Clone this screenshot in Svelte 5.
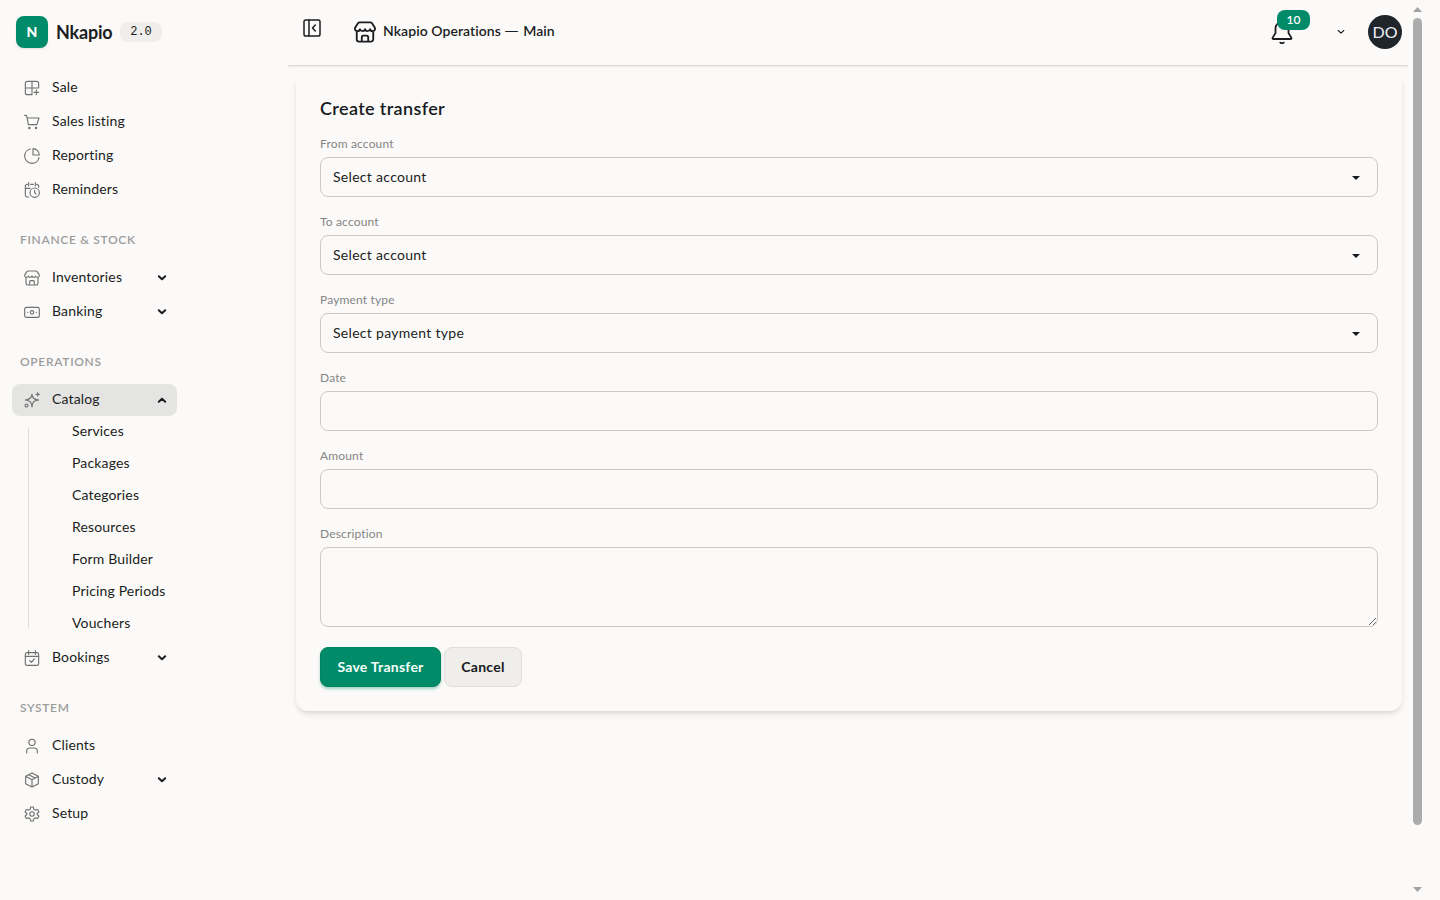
<script lang="ts">
  type Item = { label: string; icon: string; arrow?: 'down' | 'up'; children?: string[] }
  type Section = { title?: string; items: Item[] }

  // icon markup, 24x24 viewBox, stroked with currentColor
  const store =
    '<path d="M3 11.500V20a2.500 2.500 0 0 0 2.500 2.500h13A2.500 2.500 0 0 0 21 20v-8.500M8.500 22.500v-5A1.500 1.500 0 0 1 10 16h4a1.500 1.500 0 0 1 1.500 1.500v5M6.200 1.500h11.600c.8 0 1.400.3 1.900 1L22.600 7c1 2-.3 4-2.300 4-1.500 0-2.600-.7-2.800-2-.5 1.300-1.400 2-2.800 2S12.300 10.200 12 9c-.3 1.200-1.300 2-2.700 2S7 10.300 6.500 9c-.2 1.300-1.300 2-2.800 2-2 0-3.300-2-2.300-4l2.900-4.500c.5-.7 1.100-1 1.900-1z"/>'

  const icons: Record<string, string> = {
    sale: '<path d="M12 2v20M2 12h20M22 12V5a3 3 0 0 0-3-3H5a3 3 0 0 0-3 3v14a3 3 0 0 0 3 3h7M18.500 15v7M15 18.500h7"/>',
    cart: '<path d="M1 2h1.500c1 0 1.500.5 1.700 1.500L6.500 16h12.700L22.500 6H5"/><circle cx="8" cy="21" r="1"/><circle cx="18" cy="21" r="1"/>',
    chart: '<path d="M9.500 1.500C4.500 2.500 1 7 1 12a11 11 0 0 0 11 11c5 0 9.500-3.500 10.500-8.500"/><path d="M13.500 1v9.500h9.500C23 5.500 18.500 1 13.500 1z"/>',
    reminder: '<path d="M7 1v5M17 1v5M2 9.500h7M22 8V6.500a3 3 0 0 0-3-3M7 22.500H5a3 3 0 0 1-3-3v-13a3 3 0 0 1 3-3M10 3.500h4"/><circle cx="16" cy="16" r="7"/><path d="M16 12.500V16l2 2"/>',
    store,
    cash: '<rect x="1" y="5" width="22" height="15" rx="2.500"/><circle cx="12" cy="12.500" r="2.600"/><path d="M5.500 12.500h.1M18.500 12.500h.1"/>',
    sparkles: '<path d="M12 3.500c.5 5.200 2.300 7.500 10 8.500-7.500 1-9.500 3.200-10 10.500-.7-7.300-2.700-9.500-10-10.500C9.300 11 11.500 8.700 12 3.500z"/><path d="M20.500 1v5M18 3.500h5"/><circle cx="3.800" cy="20.200" r="2.200"/>',
    booking: '<rect x="2" y="4" width="20" height="19" rx="2.500"/><path d="M7 1v5.500M17 1v5.500M2 9.500h20M8.500 16l2.500 2.500 4.500-5"/>',
    user: '<circle cx="12" cy="6.500" r="4.700"/><path d="M4 22.500V20a5 5 0 0 1 5-5h6a5 5 0 0 1 5 5v2.500"/>',
    box: '<path d="M12 1.500 21.500 6.500v11L12 22.500l-9.500-5v-11zM2.500 6.500l9.500 5 9.500-5M12 11.500v11M7.200 4l9.500 5"/>',
    gear: '<circle cx="12" cy="12" r="3.300"/><path d="M10 1.500h4l.8 3.500 2 1.200 3.600-1 2 3.500-2.600 2.500v1.600l2.600 2.500-2 3.500-3.600-1-2 1.200-.8 3.500h-4l-.8-3.500-2-1.200-3.600 1-2-3.500 2.600-2.500v-1.600L1.600 8.700l2-3.500 3.600 1 2-1.200z"/>',
  }

  const sections: Section[] = [
    {
      items: [
        { label: 'Sale', icon: 'sale' },
        { label: 'Sales listing', icon: 'cart' },
        { label: 'Reporting', icon: 'chart' },
        { label: 'Reminders', icon: 'reminder' },
      ],
    },
    {
      title: 'Finance & Stock',
      items: [
        { label: 'Inventories', icon: 'store', arrow: 'down' },
        { label: 'Banking', icon: 'cash', arrow: 'down' },
      ],
    },
    {
      title: 'Operations',
      items: [
        {
          label: 'Catalog',
          icon: 'sparkles',
          arrow: 'up',
          children: ['Services', 'Packages', 'Categories', 'Resources', 'Form Builder', 'Pricing Periods', 'Vouchers'],
        },
        { label: 'Bookings', icon: 'booking', arrow: 'down' },
      ],
    },
    {
      title: 'System',
      items: [
        { label: 'Clients', icon: 'user' },
        { label: 'Custody', icon: 'box', arrow: 'down' },
        { label: 'Setup', icon: 'gear' },
      ],
    },
  ]

  const selects = [
    { label: 'From account', value: 'Select account' },
    { label: 'To account', value: 'Select account' },
    { label: 'Payment type', value: 'Select payment type' },
  ]
</script>

<div class="app">
  <aside>
    <div class="brand">
      <span class="logo">N</span>
      <span class="name">Nkapio</span>
      <span class="version">2.0</span>
    </div>
    <nav>
      {#each sections as section}
        {#if section.title}
          <h2>{section.title}</h2>
        {/if}
        <ul>
          {#each section.items as item}
            <li>
              <a class="item" class:open={item.children} href="#top">
                <svg class="icon" viewBox="0 0 24 24">{@html icons[item.icon]}</svg>
                <span>{item.label}</span>
                {#if item.arrow}
                  <svg class="arrow {item.arrow}" viewBox="0 0 10 10"><path d="M1.800 3.300 5 6.300l3.200-3" /></svg>
                {/if}
              </a>
              {#if item.children}
                <ul class="children">
                  {#each item.children as child}
                    <li><a href="#top">{child}</a></li>
                  {/each}
                </ul>
              {/if}
            </li>
          {/each}
        </ul>
      {/each}
    </nav>
  </aside>

  <main>
    <header>
      <svg class="collapse" viewBox="0 0 18 18">
        <rect x="1" y="1" width="16" height="16" rx="1.800" /><path d="M6 1v16M12.300 6 9.500 9l2.800 3" />
      </svg>
      <svg class="shop" viewBox="0 0 24 24">{@html store}</svg>
      <strong>Nkapio Operations <i>—</i> Main</strong>
      <div class="bell">
        <svg viewBox="0 0 22 24">
          <path d="M11 2a6.500 6.500 0 0 0-6.500 6.500V13L1.700 17.600c-.5.900 0 1.400.8 1.400h17c.8 0 1.300-.5.8-1.400L17.500 13V8.500A6.500 6.500 0 0 0 11 2z" />
          <path d="M9.300 22.600c1 .8 2.400.8 3.400 0" />
        </svg>
        <span>10</span>
      </div>
      <svg class="caret" viewBox="0 0 8 8"><path d="M1.200 2.500 4 5.200l2.800-2.700" /></svg>
      <div class="avatar">DO</div>
    </header>

    <form class="card">
      <h1>Create transfer</h1>
      {#each selects as field}
        <div class="field">
          <span class="label">{field.label}</span>
          <div class="control select">
            <span>{field.value}</span>
            <svg viewBox="0 0 8 4"><path d="M0 0h8L4 4z" /></svg>
          </div>
        </div>
      {/each}
      <label class="field">
        <span class="label">Date</span>
        <input class="control" type="text" />
      </label>
      <label class="field">
        <span class="label">Amount</span>
        <input class="control" type="text" />
      </label>
      <label class="field">
        <span class="label">Description</span>
        <textarea class="control"></textarea>
      </label>
      <div class="actions">
        <button type="button" class="primary">Save Transfer</button>
        <button type="button">Cancel</button>
      </div>
    </form>
  </main>

  <div class="scrollbar">
    <svg viewBox="0 0 9 5"><path d="M0 5h9L4.500 0z" /></svg>
    <div class="thumb"></div>
    <svg viewBox="0 0 9 5"><path d="M0 0h9L4.500 5z" /></svg>
  </div>
</div>

<style>
  :global(body) {
    background: #fbfaf9;
    overflow: hidden;
  }

  .app {
    display: flex;
    height: 900px;
    color: #1c1d20;
    background: #fbfaf9;
    font: 14px/20px Lato, 'Noto Sans', sans-serif;
    font-variant-ligatures: none;
  }

  .app * {
    box-sizing: border-box;
  }

  svg {
    display: block;
    flex: none;
    fill: none;
    stroke: currentColor;
    stroke-linecap: round;
    stroke-linejoin: round;
  }

  ul {
    list-style: none;
    margin: 0;
    padding: 0;
  }

  a {
    color: inherit;
    text-decoration: none;
  }

  aside {
    width: 288px;
    flex: none;
    padding: 16px 12px;
  }

  .brand {
    display: flex;
    align-items: center;
    height: 32px;
    padding-left: 4px;
    margin-bottom: 24px;
  }

  .logo {
    width: 32px;
    height: 32px;
    border-radius: 8px;
    background: #018b68;
    color: #fff;
    font-weight: 900;
    line-height: 31px;
    text-align: center;
    box-shadow: 0 1px 2px rgba(0, 0, 0, 0.1);
  }

  .name {
    margin-left: 8px;
    width: 56px;
    font-size: 18px;
    font-weight: 700;
    letter-spacing: -0.2px;
  }

  .version {
    margin-left: 8px;
    width: 42px;
    height: 20px;
    border-radius: 8px;
    background: #efeeec;
    font: 12px/20px 'Liberation Mono', monospace;
    text-align: center;
  }

  nav {
    width: 165px;
  }

  nav > ul {
    display: grid;
    gap: 2px;
    letter-spacing: 0.15px;
  }

  h2 {
    margin: 0;
    padding: 24px 8px 12px;
    color: #9c9c9b;
    font-size: 12px;
    font-weight: 600;
    letter-spacing: 0.68px;
    line-height: 20px;
    text-transform: uppercase;
    white-space: nowrap;
  }

  .item {
    display: flex;
    align-items: center;
    gap: 12px;
    height: 32px;
    padding: 0 10px 0 12px;
    border-radius: 8px;
  }

  .item.open {
    background: #e4e4e3;
  }

  .item span {
    flex: 1;
    white-space: nowrap;
    margin-top: -2px;
  }

  .icon {
    width: 16px;
    height: 16px;
    color: #707070;
    stroke-width: 1.700;
  }

  .arrow {
    width: 10px;
    height: 10px;
    stroke-width: 2;
  }

  .arrow.up {
    transform: rotate(180deg);
  }

  .children {
    position: relative;
  }

  .children::before {
    content: '';
    position: absolute;
    left: 16px;
    top: 12px;
    bottom: 12px;
    width: 1px;
    background: #dededd;
  }

  .children a {
    display: block;
    height: 32px;
    padding-left: 60px;
    line-height: 30px;
    white-space: nowrap;
  }

  main {
    width: 1120px;
    flex: none;
  }

  header {
    position: relative;
    display: flex;
    align-items: center;
    height: 65px;
    padding: 0 6px 2px 15px;
    background: #fbfaf9;
    box-shadow: 0 1px 2px rgba(0, 0, 0, 0.18);
    clip-path: inset(0 0 -4px 0);
  }

  .collapse {
    width: 18px;
    height: 18px;
    margin-bottom: 7px;
    stroke-width: 1.500;
  }

  .shop {
    width: 22px;
    height: 22px;
    margin-left: 33px;
    stroke-width: 2;
  }

  header strong {
    margin: -2px 0 0 7px;
    font-weight: 600;
    letter-spacing: 0.06px;
  }

  header strong i {
    display: inline-block;
    font-style: normal;
    transform: scaleX(1.35);
    margin: 0 2px;
  }

  .bell {
    position: relative;
    margin-left: auto;
  }

  .bell svg {
    width: 22px;
    height: 24px;
    stroke-width: 1.800;
  }

  .bell span {
    position: absolute;
    left: 6px;
    top: -10px;
    width: 33px;
    height: 20px;
    border-radius: 8px;
    background: #018b68;
    color: #fff;
    font-size: 12px;
    font-weight: 600;
    text-align: center;
  }

  .caret {
    width: 8px;
    height: 8px;
    margin: 0 23px 0 44px;
    stroke-width: 1.100;
  }

  .avatar {
    width: 34px;
    height: 34px;
    border-radius: 50%;
    background: #20252c;
    color: #edf1f5;
    font-size: 16px;
    line-height: 33px;
    text-align: center;
  }

  .card {
    margin: 7px 6px 0 8px;
    padding: 24px;
    border-radius: 12px;
    box-shadow:
      0 4px 6px -1px rgba(0, 0, 0, 0.1),
      0 2px 4px -2px rgba(0, 0, 0, 0.1);
  }

  h1 {
    margin: 0 0 7px;
    font-size: 18px;
    font-weight: 600;
    letter-spacing: 0.36px;
    line-height: 25px;
    height: 28px;
    color: #171a20;
  }

  .field {
    display: block;
    margin-bottom: 12px;
  }

  .label {
    display: block;
    height: 26px;
    color: #858584;
    font-size: 12px;
    letter-spacing: 0.16px;
    line-height: 26px;
  }

  .control {
    display: flex;
    align-items: center;
    width: 100%;
    height: 40px;
    margin: 0;
    padding: 0 17px 0 12px;
    border: 1px solid #cbcac9;
    border-radius: 8px;
    background: #fbfaf9;
    font: inherit;
    letter-spacing: 0.3px;
  }

  .select {
    justify-content: space-between;
  }

  .select svg {
    width: 8px;
    height: 4px;
    fill: #171a20;
    stroke: none;
    margin-top: 2px;
  }

  textarea.control {
    display: block;
    height: 80px;
  }

  .actions {
    display: flex;
    gap: 3px;
    margin-top: 20px;
  }

  button {
    width: 78px;
    height: 40px;
    padding: 0;
    border: 1px solid #e1dfdd;
    border-radius: 8px;
    background: #efeeeb;
    color: #171a20;
    font: inherit;
    font-weight: 700;
    letter-spacing: 0.25px;
  }

  button.primary {
    width: 121px;
    border-color: #018360;
    background: #018b68;
    color: #f4fffb;
    box-shadow: 0 2px 3px rgba(1, 139, 104, 0.35);
  }

  .scrollbar {
    display: flex;
    flex-direction: column;
    width: 9px;
    margin-left: 5px;
    padding: 7px 0 8px;
  }

  .scrollbar svg {
    width: 9px;
    height: 5px;
    fill: #a3a3a3;
    stroke: none;
  }

  .thumb {
    height: 807px;
    margin: 6px 0 auto;
    border-radius: 5px;
    background: #acacac;
  }
</style>
